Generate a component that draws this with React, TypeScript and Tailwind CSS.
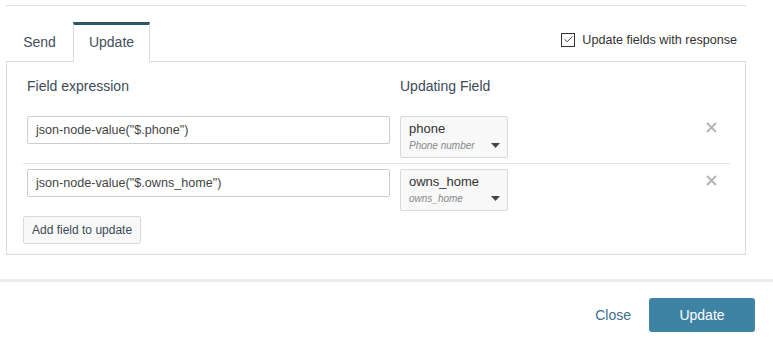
import { Check } from 'lucide-react';

const rows = [
  { expr: 'json-node-value("$.phone")', field: 'phone', sub: 'Phone number' },
  { expr: 'json-node-value("$.owns_home")', field: 'owns_home', sub: 'owns_home' },
];

function Caret() {
  return (
    <svg width="9" height="5" viewBox="0 0 9 5" className="shrink-0">
      <path d="M0 0 L9 0 L4.5 5 Z" fill="#444" />
    </svg>
  );
}

function Cross() {
  return (
    <svg width="11" height="11" viewBox="0 0 11 11">
      <path d="M1 1 L10 10 M10 1 L1 10" stroke="#b3b3b3" strokeWidth="1.8" />
    </svg>
  );
}

export default function App() {
  return (
    <div className="w-[773px] h-[340px] bg-white font-['Liberation_Sans',Arial,sans-serif] text-[#333] overflow-hidden">
      <div className="px-[6px] pt-[5px]">
        <div className="w-[740px] border-t border-[#e3e3e3]" />
        {/* tabs */}
        <div className="flex items-end w-[740px] h-[56px]">
          <div className="w-[67px] h-[39px] flex items-center justify-center text-[14px] text-[#44505c] border-b border-[#dcdcdc]">
            Send
          </div>
          <div className="w-[77px] h-[40px] border-x border-[#dcdcdc] border-t-[3px] border-t-[#2d5668] bg-white flex items-center justify-center text-[14px] text-[#44505c] pb-[2px]">
            Update
          </div>
          <div className="flex-1 h-[39px] border-b border-[#dcdcdc] flex items-center justify-end pr-[9px] pb-[4px]">
            <label className="flex items-center gap-[7px] text-[12.6px] text-[#333]">
              <span className="w-[14px] h-[14px] border border-[#333] flex items-center justify-center">
                <Check size={11} strokeWidth={2} color="#333" />
              </span>
              Update fields with response
            </label>
          </div>
        </div>
        {/* panel */}
        <div className="w-[740px] h-[193px] border-x border-b border-[#dcdcdc] pl-[16px] pr-[15px]">
          <div className="flex text-[14px] text-[#3c4a57] pt-[14px] h-[54px]">
            <div className="w-[377px] pl-[4px]">Field expression</div>
            <div>Updating Field</div>
          </div>
          {rows.map((r, i) => (
            <div
              key={i}
              className={`flex items-start ${i === 0 ? 'h-[48px] border-b border-[#e3e3e3]' : 'h-[52px] pt-[5px]'}`}
            >
              <div className="w-[377px] pl-[4px]">
                <div className="w-[363px] h-[28px] border border-[#ccc] rounded-[2px] pl-[8px] flex items-center text-[12.6px] text-[#444]">
                  {r.expr}
                </div>
              </div>
              <div className="w-[108px] h-[42px] border border-[#dadada] rounded-[2px] bg-[#f8f8f8] pl-[8px] pr-[7px] pt-[4px]">
                <div className="text-[13px] text-[#333] leading-[16px]">{r.field}</div>
                <div className="flex items-center justify-between mt-[1px]">
                  <span className="text-[10px] italic text-[#888]">{r.sub}</span>
                  <Caret />
                </div>
              </div>
              <div className="flex-1 flex justify-end pr-[13px] pt-[6px]">
                <Cross />
              </div>
            </div>
          ))}
          <button className="h-[28px] px-[8px] border border-[#dadada] rounded-[2px] bg-[#f8f8f8] text-[12px] text-[#3c4a57]">
            Add field to update
          </button>
        </div>
      </div>
      <div className="mt-[24px] h-[3px] bg-[#e9ecef]" />
      <div className="flex items-center justify-end pr-[18px] pt-[16px] gap-[18px]">
        <span className="text-[14px] text-[#3d6f8f]">Close</span>
        <button className="w-[106px] h-[34px] rounded-[3px] bg-[#3e82a4] text-white text-[14px]">Update</button>
      </div>
    </div>
  );
}
